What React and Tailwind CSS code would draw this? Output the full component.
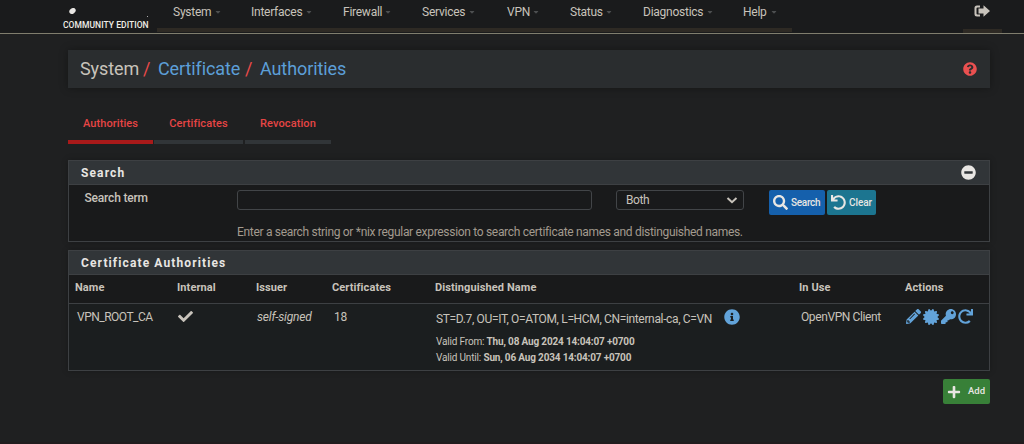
import React from "react";
import {
  FaSignOutAlt, FaQuestionCircle, FaMinusCircle, FaSearch, FaUndo, FaCheck,
  FaInfoCircle, FaPencilAlt, FaCertificate, FaKey, FaRedo, FaPlus, FaCaretDown,
} from "react-icons/fa";

const MENU = [
  ["System", "w-[78px]", "w-[38px]"],
  ["Interfaces", "w-[92px]", "w-[51px]"],
  ["Firewall", "w-[79px]", "w-[38px]"],
  ["Services", "w-[85px]", "w-[43px]"],
  ["VPN", "w-[63px]", "w-[22px]"],
  ["Status", "w-[73px]", "w-[32px]"],
  ["Diagnostics", "w-[100px]", "w-[60px]"],
  ["Help", "w-[49px]", "w-[24px]"],
];

function Header() {
  return (
    <header className="flex h-[34px] shrink-0 border-b border-[#807e6e] bg-[#1a1b1c]">
      <div className="flex w-[157px] flex-col pl-[63px] pt-[8px]">
        <svg className="h-[12px] w-[90px]" viewBox="0 0 90 12">
          <ellipse cx="9.5" cy="3" rx="3.4" ry="2.6" fill="#e8e6e3" transform="rotate(-35 9.5 3)" />
          <rect x="84" y="8" width="1" height="1" fill="#aaa" />
        </svg>
        <span className="whitespace-nowrap text-[8.5px] font-medium leading-[11px] tracking-[0.05px] text-[#f0eee8]">COMMUNITY EDITION</span>
      </div>
      <nav className="mb-px flex w-[635px] border-b-4 border-[#2e2a24] pl-[16px]">
        {MENU.map(([label, w, tw]) => (
          <a key={label} className={`flex h-[24px] items-center whitespace-nowrap text-[12px] tracking-[-0.25px] text-[#c8c3bb] ${w}`}>
            <span className={tw}>{label}</span>
            <FaCaretDown className="ml-[4px] h-[8px] w-[6px] text-[#4d4f50]" />
          </a>
        ))}
      </nav>
      <div className="ml-auto mr-[22px] flex w-[39px] justify-center border-b-4 border-[#2e2a24] pt-[3px]">
        <svg className="ml-[-2px] h-[16px] w-[16px]" viewBox="0 0 16 16" fill="#c8c3bb">
          <path d="M6 2.5H3Q.5 2.5.5 5v6Q.5 13.5 3 13.5h3v-2H3.5q-1 0-1-1v-5q0-1 1-1H6z" />
          <path d="M4.5 5.5h5V2.2L16 8l-6.5 5.8v-3.3h-5z" />
        </svg>
      </div>
    </header>
  );
}

function Heading({ children, right }) {
  return (
    <div className="flex h-[24px] items-center justify-between border-b border-[#3d4043] bg-[#313538] pl-[12px] pr-[13px] text-[12px] font-bold tracking-[1.12px] text-[#e8e6e3]">
      <span>{children}</span>
      {right}
    </div>
  );
}

const COLS = "grid grid-cols-[102px_79px_76px_102px_365px_106px_1fr] pl-[6px]";

export default function App() {
  return (
    <div className="flex h-[444px] w-[1024px] flex-col overflow-hidden border-b-2 border-[#211c1e] bg-[#1f2021] font-['Roboto',sans-serif] text-[#c8c3bb]">
      <Header />
      <main className="ml-[68px] mt-[16px] w-[922px]">
        <div className="flex h-[38px] items-center justify-between bg-[#2a2d2f] pb-px pl-[12px] pr-[13px] text-[18px] tracking-[-0.1px] shadow-[0_0_8px_rgba(0,0,0,0.35)]">
          <div className="flex whitespace-nowrap">
            <span className="w-[63px]">System</span>
            <span className="w-[15px] text-[#ea4a4a]">/</span>
            <span className="w-[87px] text-[#5c9fd8]">Certificate</span>
            <span className="w-[15px] text-[#ea4a4a]">/</span>
            <span className="text-[#5c9fd8]">Authorities</span>
          </div>
          <FaQuestionCircle className="mt-px size-[14px] text-[#ea5050]" />
        </div>

        <div className="mt-[20px] flex h-[36px] text-[11px] font-medium tracking-[0.1px] text-[#e64545]">
          <a className="mr-px w-[85px] border-b-4 border-[#a91a1a] pt-[8px] text-center">Authorities</a>
          <a className="mr-[2px] w-[89px] border-b-4 border-[#313538] pt-[8px] text-center">Certificates</a>
          <a className="w-[86px] border-b-4 border-[#313538] pt-[8px] text-center">Revocation</a>
        </div>

        <section className="mt-[16px] h-[82px] border border-[#3d4043] bg-[#191a1b] shadow-[0_0_6px_rgba(0,0,0,0.25)]">
          <Heading right={<FaMinusCircle className="size-[15px]" />}>Search</Heading>
          <div className="flex pt-[5px]">
            <span className="w-[168px] pl-[15.5px] text-[12px] font-medium leading-[16px] tracking-[-0.18px]">Search term</span>
            <div className="h-[20px] w-[355px] rounded-[3px] border border-[#424548]" />
            <div className="ml-[24px] flex h-[20px] w-[128px] items-center justify-between rounded-[3px] border border-[#424548] pl-[9px] pr-[5px] text-[12px] tracking-[-0.4px]">
              <span>Both</span>
              <svg className="h-[7px] w-[12px]" viewBox="0 0 12 7" fill="none" stroke="#c8c3bb" strokeWidth="2"><path d="M1.5 1 6 5.2 10.5 1" /></svg>
            </div>
            <button className="ml-[25px] flex h-[25px] w-[56px] items-center rounded-[2px] bg-[#1560ac] pl-[4px] text-[10px] font-medium tracking-[-0.3px] text-[#e8e6e3]">
              <FaSearch className="mr-[3px] size-[15px] shrink-0" /><span>Search</span>
            </button>
            <button className="ml-[2px] flex h-[25px] w-[49px] items-center rounded-[2px] bg-[#1c7590] pl-[4px] text-[10px] font-medium tracking-[-0.1px] text-[#e8e6e3]">
              <FaUndo className="mr-[3px] size-[15px] shrink-0" /><span>Clear</span>
            </button>
          </div>
          <p className="ml-[168px] mt-[9px] text-[12px] leading-[16px] tracking-[-0.31px] text-[#a39b8f]">Enter a search string or *nix regular expression to search certificate names and distinguished names.</p>
        </section>

        <section className="mt-[8px] h-[121px] border border-[#3d4043] bg-[#191a1b] shadow-[0_0_6px_rgba(0,0,0,0.25)]">
          <Heading>Certificate Authorities</Heading>
          <div className={`${COLS} h-[29px] items-center border-b border-[#3d4043] pb-px text-[11px] font-bold tracking-[0.1px]`}>
            <span>Name</span><span>Internal</span><span>Issuer</span><span>Certificates</span>
            <span className="pl-px">Distinguished Name</span><span>In Use</span><span>Actions</span>
          </div>
          <div className={`${COLS} h-[66px] bg-[#1b1e1f] pt-[5px] text-[12px] leading-[16px]`}>
            <span className="pl-[2px] tracking-[-0.5px]">VPN_ROOT_CA</span>
            <FaCheck className="ml-px size-[15px]" />
            <span className="pl-px italic tracking-[-0.2px]">self-signed</span>
            <span className="pl-[2px] tracking-[-0.2px]">18</span>
            <div className="pl-[2px]">
              <div className="flex whitespace-nowrap">
                <span className="w-[288px] pt-[2px] tracking-[-0.35px]">ST=D.7, OU=IT, O=ATOM, L=HCM, CN=internal-ca, C=VN</span>
                <FaInfoCircle className="size-[16px] text-[#62a3d9]" />
              </div>
              <div className="mt-[7px] text-[10px] leading-[15.5px] tracking-[-0.17px]">
                <div>Valid From: <b>Thu, 08 Aug 2024 14:04:07 +0700</b></div>
                <div>Valid Until: <b>Sun, 06 Aug 2034 14:04:07 +0700</b></div>
              </div>
            </div>
            <span className="pl-[2px] tracking-[-0.4px]">OpenVPN Client</span>
            <div className="flex gap-[2px] pl-px text-[#62a3d9]">
              <FaPencilAlt className="size-[15px]" /><FaCertificate className="size-[16px]" />
              <FaKey className="size-[15px]" /><FaRedo className="size-[15px]" />
            </div>
          </div>
        </section>

        <button className="ml-auto mt-[8px] flex h-[25px] w-[47px] items-center rounded-[2px] bg-[#388038] pl-[4px] text-[9.5px] font-medium text-[#e8e6e3]">
          <FaPlus className="mr-[7px] size-[14px]" /><span>Add</span>
        </button>
      </main>
    </div>
  );
}
